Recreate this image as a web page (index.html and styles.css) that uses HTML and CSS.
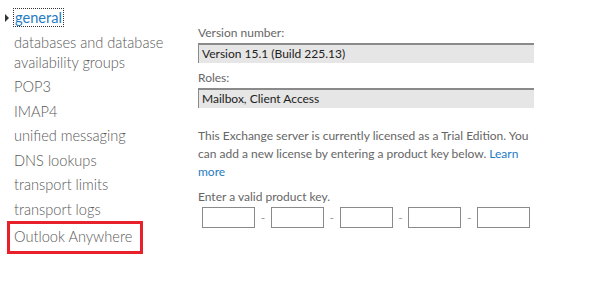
FILE: index.html
```html
<!DOCTYPE html>
<html lang="en">
<head>
    <meta charset="UTF-8">
    <title>Server properties</title>
    <link rel="stylesheet" href="styles.css">
</head>
<body>
    <div class="page">
        <ul class="nav">
            <li class="nav-item current"><span class="focus">general</span></li>
            <li class="nav-item">databases and database availability groups</li>
            <li class="nav-item">POP3</li>
            <li class="nav-item">IMAP4</li>
            <li class="nav-item">unified messaging</li>
            <li class="nav-item">DNS lookups</li>
            <li class="nav-item">transport limits</li>
            <li class="nav-item">transport logs</li>
            <li class="nav-item marked">Outlook Anywhere</li>
        </ul>

        <section class="details">
            <label class="field-label">Version number:</label>
            <div class="readonly">Version 15.1 (Build 225.13)</div>

            <label class="field-label">Roles:</label>
            <div class="readonly">Mailbox, Client Access</div>

            <p class="license">This Exchange server is currently licensed as a Trial Edition. You can add a new license by entering a product key below. <a href="#">Learn more</a></p>

            <label class="field-label">Enter a valid product key.</label>
            <div class="key-row">
                <input type="text" class="key-box">
                <span class="dash">-</span>
                <input type="text" class="key-box">
                <span class="dash">-</span>
                <input type="text" class="key-box">
                <span class="dash">-</span>
                <input type="text" class="key-box">
                <span class="dash">-</span>
                <input type="text" class="key-box">
            </div>
        </section>
    </div>
</body>
</html>
```

FILE: styles.css
```css
body {
    margin: 0;
    background: #fff;
    font-family: Lato, "Open Sans", sans-serif;
}
.page {
    display: flex;
}
.nav {
    list-style: none;
    margin: 0;
    padding: 5px 0 0 14px;
    width: 170px;
}
.nav-item {
    font-size: 14.6px;
    font-weight: 300;
    line-height: 20px;
    padding: 2px 0 2.5px;
    color: #585858;
    width: 160px;
}
.nav-item.current {
    position: relative;
    padding-top: 3px;
    color: #1e7bc4;
    font-weight: 400;
}
.nav-item.current::before {
    content: "";
    position: absolute;
    left: -9px;
    top: 9px;
    border-left: 4px solid #333;
    border-top: 4px solid transparent;
    border-bottom: 4px solid transparent;
}
.focus {
    outline: 1px dotted #333;
    padding: 0 1px;
}
.nav-item.marked {
    margin-left: -7px;
    margin-top: -1px;
    padding: 3px 4px 4px 4px;
    width: 122px;
    white-space: nowrap;
    border: 3px solid #e8202a;
}
.details {
    padding: 24px 0 0 14px;
    width: 336px;
    font-size: 12px;
    color: #666;
}
.field-label {
    display: block;
    line-height: 17px;
}
.readonly {
    margin: 2px 0 6px;
    height: 18px;
    line-height: 18px;
    padding-left: 3px;
    background: #e6e6e6;
    border-top: 2px solid #8a8a8a;
    border-left: 1px solid #8a8a8a;
    color: #222;
}
.license {
    margin: 19px 0 7px;
    line-height: 18px;
}
.license a {
    color: #1e7bc4;
    text-decoration: none;
}
.key-row {
    display: flex;
    align-items: center;
    margin: 2px 0 0 4px;
}
.key-box {
    width: 51px;
    height: 19px;
    padding: 0;
    border: 1px solid #8a8a8a;
    box-sizing: content-box;
}
.dash {
    width: 15.75px;
    text-align: center;
    color: #999;
}
```
